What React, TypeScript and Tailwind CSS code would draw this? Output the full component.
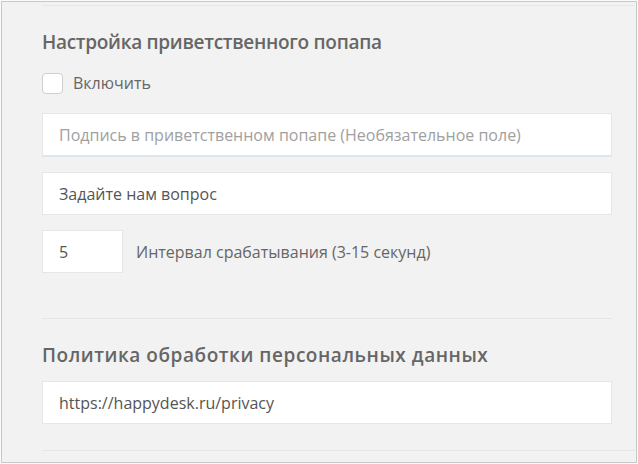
const font = { fontFamily: '"Open Sans", "Noto Sans", sans-serif' };

export default function App() {
  return (
    <div className="h-[464px] w-[638px] bg-[#fafafa] p-px" style={font}>
      <div className="flex h-full flex-col border border-[#c8c8c8] bg-[#f2f2f2]">
        <div className="ml-10 mr-px mt-[3px] border-t border-[#e8e8e8]" />

        <div className="pl-10 pr-6">
          <h2 className="mt-[23px] text-[19px] font-semibold leading-[26px] tracking-[-0.3px] text-[#666]">
            Настройка приветственного попапа
          </h2>

          <label className="mt-[18px] flex items-center gap-[10px]">
            <span className="h-[21px] w-[21px] rounded-[4px] border border-[#cfcfcf] bg-white" />
            <span className="text-[16px] leading-[21px] text-[#666]">Включить</span>
          </label>

          <div className="mt-[19px] flex h-[44px] items-center border border-[#e6e6e6] border-b-2 border-b-[#dde7ec] bg-white px-4 text-[16px] text-[#a0a0a0]">
            Подпись в приветственном попапе (Необязательное поле)
          </div>

          <div className="mt-[15px] flex h-[43px] items-center border border-[#e6e6e6] bg-white px-4 text-[16px] text-[#555]">
            Задайте нам вопрос
          </div>

          <div className="mt-[15px] flex items-center gap-[13px]">
            <div className="flex h-[43px] w-[81px] items-center border border-[#e6e6e6] bg-white px-4 text-[16px] text-[#555]">
              5
            </div>
            <span className="text-[16px] text-[#666]">Интервал срабатывания (3-15 секунд)</span>
          </div>

          <div className="mt-[45px] border-t border-[#e6e6e6]" />

          <h2 className="mt-[23px] text-[19px] font-semibold leading-[26px] tracking-[0.55px] text-[#666]">
            Политика обработки персональных данных
          </h2>

          <div className="mt-[13px] flex h-[43px] items-center border border-[#e6e6e6] bg-white px-4 text-[16px] text-[#555]">
            https://happydesk.ru/privacy
          </div>
        </div>

        <div className="ml-10 mr-px mt-[26px] border-t border-[#e6e6e6]" />
      </div>
    </div>
  );
}
